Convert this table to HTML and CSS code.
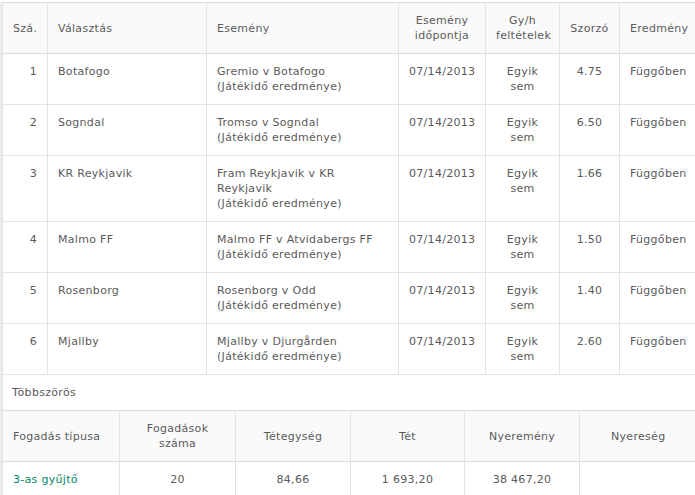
FILE: index.html
```html
<!DOCTYPE html>
<html lang="hu">
<head>
<meta charset="utf-8">
<link rel="stylesheet" href="styles.css">
</head>
<body>
<div class="page">
  <table class="bets">
    <colgroup>
      <col class="c-no"><col class="c-sel"><col class="c-ev"><col class="c-date"><col class="c-cond"><col class="c-odds"><col class="c-res">
    </colgroup>
    <thead>
      <tr>
        <th class="num">Szá.</th>
        <th>Választás</th>
        <th>Esemény</th>
        <th class="ctr">Esemény<br>időpontja</th>
        <th class="ctr">Gy/h<br>feltételek</th>
        <th class="ctr">Szorzó</th>
        <th class="ctr">Eredmény</th>
      </tr>
    </thead>
    <tbody>
      <tr><td class="num">1</td><td>Botafogo</td><td>Gremio v Botafogo<br>(Játékidő eredménye)</td><td class="ctr">07/14/2013</td><td class="ctr">Egyik<br>sem</td><td class="ctr">4.75</td><td class="ctr">Függőben</td></tr>
      <tr><td class="num">2</td><td>Sogndal</td><td>Tromso v Sogndal<br>(Játékidő eredménye)</td><td class="ctr">07/14/2013</td><td class="ctr">Egyik<br>sem</td><td class="ctr">6.50</td><td class="ctr">Függőben</td></tr>
      <tr><td class="num">3</td><td>KR Reykjavik</td><td>Fram Reykjavik v KR<br>Reykjavik<br>(Játékidő eredménye)</td><td class="ctr">07/14/2013</td><td class="ctr">Egyik<br>sem</td><td class="ctr">1.66</td><td class="ctr">Függőben</td></tr>
      <tr><td class="num">4</td><td>Malmo FF</td><td>Malmo FF v Atvidabergs FF<br>(Játékidő eredménye)</td><td class="ctr">07/14/2013</td><td class="ctr">Egyik<br>sem</td><td class="ctr">1.50</td><td class="ctr">Függőben</td></tr>
      <tr><td class="num">5</td><td>Rosenborg</td><td>Rosenborg v Odd<br>(Játékidő eredménye)</td><td class="ctr">07/14/2013</td><td class="ctr">Egyik<br>sem</td><td class="ctr">1.40</td><td class="ctr">Függőben</td></tr>
      <tr><td class="num">6</td><td>Mjallby</td><td>Mjallby v Djurgården<br>(Játékidő eredménye)</td><td class="ctr">07/14/2013</td><td class="ctr">Egyik<br>sem</td><td class="ctr">2.60</td><td class="ctr">Függőben</td></tr>
    </tbody>
  </table>
  <div class="section">Többszörös</div>
  <table class="multi">
    <colgroup>
      <col class="m1"><col class="m2"><col class="m3"><col class="m4"><col class="m5"><col class="m6">
    </colgroup>
    <thead>
      <tr>
        <th>Fogadás típusa</th>
        <th class="ctr">Fogadások<br>száma</th>
        <th class="ctr">Tétegység</th>
        <th class="ctr">Tét</th>
        <th class="ctr">Nyeremény</th>
        <th class="ctr">Nyereség</th>
      </tr>
    </thead>
    <tbody>
      <tr><td class="link">3-as gyűjtő</td><td class="ctr">20</td><td class="ctr">84,66</td><td class="ctr">1 693,20</td><td class="ctr">38 467,20</td><td class="ctr"></td></tr>
    </tbody>
  </table>
</div>
</body>
</html>
```

FILE: styles.css
```css
html, body {
  margin: 0;
  padding: 0;
}
body {
  background: #ffffff;
  font-family: "DejaVu Sans", Verdana, sans-serif;
  font-size: 11px;
  line-height: 15px;
  letter-spacing: 0.3px;
  color: #5a5a5a;
  overflow: hidden;
}
.page {
  margin-top: 2px;
  width: 695px;
  background: #ececec;
  padding-left: 2px;
  box-sizing: border-box;
}
table {
  border-collapse: collapse;
  table-layout: fixed;
  width: 694px;
  background: #ffffff;
}
th, td {
  padding: 10px 10px;
  text-align: left;
  vertical-align: top;
  border: 1px solid #e3e3e3;
  font-weight: normal;
}
th {
  vertical-align: middle;
  background: #fafafa;
}
thead tr th {
  border-top-color: #dcdcdc;
  border-bottom-color: #dcdcdc;
}
tr > :last-child {
  border-right: none;
}
.num { text-align: right; }
.ctr { text-align: center; }
.c-no { width: 45px; }
.c-sel { width: 159px; }
.c-ev { width: 192px; }
.c-date { width: 87px; }
.c-cond { width: 74px; }
.c-odds { width: 60px; }
.c-res { width: 77px; }
.section {
  background: #ffffff;
  border-left: 1px solid #e3e3e3;
  padding: 10px 9px;
  height: 15px;
  width: 694px;
  box-sizing: content-box;
}
.m1 { width: 117px; }
.m2 { width: 116px; }
.m3 { width: 115px; }
.m4 { width: 114px; }
.m5 { width: 115px; }
.m6 { width: 117px; }
.link { color: #00876b; }
```
